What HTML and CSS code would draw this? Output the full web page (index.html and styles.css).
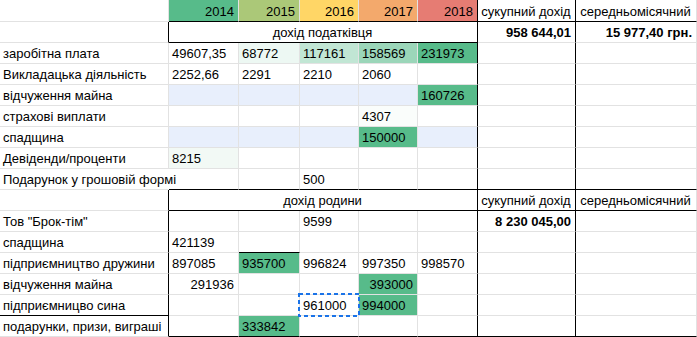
FILE: index.html
```html
<!DOCTYPE html>
<html lang="uk">
<head>
<meta charset="utf-8">
<title>Доходи</title>
<link rel="stylesheet" href="styles.css">
</head>
<body>
<table class="sheet">
  <colgroup>
    <col class="c-a"><col class="c-b"><col class="c-c"><col class="c-d"><col class="c-e"><col class="c-f"><col class="c-g"><col class="c-h">
  </colgroup>
  <tr class="head">
    <td></td>
    <td class="bb num y14">2014</td>
    <td class="bb num y15">2015</td>
    <td class="bb num y16">2016</td>
    <td class="bb num y17">2017</td>
    <td class="bb br num y18">2018</td>
    <td class="bb br ctr">сукупний дохід</td>
    <td class="bb ctr">середньомісячний</td>
  </tr>
  <tr>
    <td class="br"></td>
    <td class="bb br ctr" colspan="5">дохід податківця</td>
    <td class="br num bold">958 644,01</td>
    <td class="num bold">15 977,40 грн.</td>
  </tr>
  <tr>
    <td>заробітна плата</td>
    <td>49607,35</td>
    <td class="g1">68772</td>
    <td class="g2">117161</td>
    <td class="g3">158569</td>
    <td class="br green">231973</td>
    <td class="br"></td>
    <td></td>
  </tr>
  <tr>
    <td>Викладацька діяльність</td>
    <td>2252,66</td>
    <td>2291</td>
    <td>2210</td>
    <td>2060</td>
    <td class="br"></td>
    <td class="br"></td>
    <td></td>
  </tr>
  <tr>
    <td>відчуження майна</td>
    <td class="blue"></td>
    <td class="blue"></td>
    <td class="blue"></td>
    <td class="blue"></td>
    <td class="br green">160726</td>
    <td class="br"></td>
    <td></td>
  </tr>
  <tr>
    <td>страхові виплати</td>
    <td></td>
    <td></td>
    <td></td>
    <td class="g0">4307</td>
    <td class="br"></td>
    <td class="br"></td>
    <td></td>
  </tr>
  <tr>
    <td>спадщина</td>
    <td class="blue"></td>
    <td class="blue"></td>
    <td class="blue"></td>
    <td class="green">150000</td>
    <td class="br blue"></td>
    <td class="br"></td>
    <td></td>
  </tr>
  <tr>
    <td>Девіденди/проценти</td>
    <td class="g05">8215</td>
    <td></td>
    <td></td>
    <td></td>
    <td class="br"></td>
    <td class="br"></td>
    <td></td>
  </tr>
  <tr>
    <td class="spill">Подарунок у грошовій формі</td>
    <td class="bb"></td>
    <td class="bb"></td>
    <td class="bb">500</td>
    <td class="bb"></td>
    <td class="bb br"></td>
    <td class="bb br"></td>
    <td class="bb"></td>
  </tr>
  <tr>
    <td class="br"></td>
    <td class="bb br ctr" colspan="5">дохід родини</td>
    <td class="bb br ctr">сукупний дохід</td>
    <td class="bb ctr">середньомісячний</td>
  </tr>
  <tr>
    <td class="br">Тов "Брок-тім"</td>
    <td></td>
    <td></td>
    <td>9599</td>
    <td></td>
    <td class="br"></td>
    <td class="br num bold">8 230 045,00</td>
    <td></td>
  </tr>
  <tr>
    <td class="br">спадщина</td>
    <td>421139</td>
    <td class="bb"></td>
    <td></td>
    <td></td>
    <td class="br"></td>
    <td class="br"></td>
    <td></td>
  </tr>
  <tr>
    <td class="br">підприємництво дружини</td>
    <td>897085</td>
    <td class="green">935700</td>
    <td>996824</td>
    <td>997350</td>
    <td class="br">998570</td>
    <td class="br"></td>
    <td></td>
  </tr>
  <tr>
    <td class="br">відчуження майна</td>
    <td class="num">291936</td>
    <td></td>
    <td></td>
    <td class="num green">393000</td>
    <td class="br"></td>
    <td class="br"></td>
    <td></td>
  </tr>
  <tr>
    <td class="br bb">підприємницво сина</td>
    <td></td>
    <td></td>
    <td class="sel">961000<svg class="marquee" width="62" height="24" viewBox="0 0 62 24"><rect x="1" y="1" width="60" height="22" fill="none" stroke="#1a73e8" stroke-width="2" stroke-dasharray="4 3"/></svg></td>
    <td class="green">994000</td>
    <td class="br"></td>
    <td class="br"></td>
    <td></td>
  </tr>
  <tr>
    <td class="br">подарунки, призи, виграші</td>
    <td class="bb"></td>
    <td class="bb green">333842</td>
    <td class="bb"></td>
    <td class="bb"></td>
    <td class="bb br"></td>
    <td class="bb br"></td>
    <td class="bb"></td>
  </tr>
</table>
</body>
</html>
```

FILE: styles.css
```css
html, body {
  margin: 0;
  padding: 0;
  background: #ffffff;
  overflow: hidden;
}

.sheet {
  table-layout: fixed;
  border-collapse: separate;
  border-spacing: 0;
  width: 697px;
  font-family: "Liberation Sans", Arial, sans-serif;
  font-size: 13px;
  color: #000000;
}

.c-a { width: 169px; }
.c-b { width: 70px; }
.c-c { width: 61px; }
.c-d { width: 59px; }
.c-e { width: 59px; }
.c-f { width: 60px; }
.c-g { width: 98px; }
.c-h { width: 121px; }

.sheet td {
  box-sizing: border-box;
  height: 21px;
  padding: 0 4px 2px 3px;
  line-height: 15px;
  vertical-align: bottom;
  white-space: nowrap;
  overflow: hidden;
  border-right: 1px solid #e2e2e2;
  border-bottom: 1px solid #e2e2e2;
}

.sheet .head td {
  height: 22px;
}

.sheet td.bb { border-bottom-color: #000000; }
.sheet td.br { border-right-color: #000000; }

.num { text-align: right; }
.ctr { text-align: center; }
.bold { font-weight: bold; }

.sheet td.spill {
  overflow: visible;
  border-right-color: transparent;
}

.y14 { background: #57bb8a; }
.y15 { background: #abc878; }
.y16 { background: #ffd666; }
.y17 { background: #f3a96c; }
.y18 { background: #e67c73; }

.green { background: #57bb8a; }
.g0 { background: #fafdfb; }
.g05 { background: #f2f9f5; }
.g1 { background: #edf8f3; }
.g2 { background: #c1e6d4; }
.g3 { background: #9bd6b9; }
.blue { background: #e8effc; }

.sheet td.sel {
  position: relative;
  overflow: visible;
}

.marquee {
  position: absolute;
  left: -2px;
  top: -2px;
  display: block;
}
```
